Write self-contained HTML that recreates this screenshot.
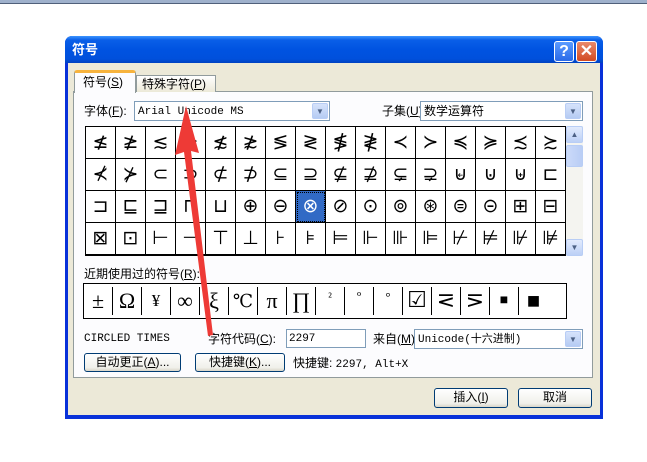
<!DOCTYPE html>
<html><head><meta charset="utf-8"><style>
*{margin:0;padding:0;box-sizing:border-box}
body{width:647px;height:462px;background:#fff;position:relative;overflow:hidden;font-family:"Liberation Sans","Noto Sans CJK SC",sans-serif;font-size:12px;color:#000}
.a{position:absolute}
.t{position:absolute;font-size:12px;white-space:nowrap;line-height:14px}
.mono{font-family:"Liberation Mono","Noto Sans CJK SC",monospace;font-size:11px}
.combo{position:absolute;background:#fff;border:1px solid #7f9db9}
.dd{position:absolute;right:1px;top:1px;bottom:1px;width:16px;background:linear-gradient(#d6e3fb,#b5cbf3);border:1px solid #b8cdf5;border-radius:2px;color:#4d6185;font-size:8px;text-align:center;line-height:15px}
.btn{position:absolute;border:1px solid #003c74;border-radius:3px;background:linear-gradient(#fff,#f0f0ea 80%,#d8d5c8);text-align:center;line-height:17px;font-size:12px}
.grid{position:absolute;left:85px;top:126px;width:481px;height:130px;border:1px solid #000;background:#fff;display:grid;grid-template-columns:repeat(16,30px);grid-template-rows:repeat(4,32px)}
.grid div{border-right:1px solid #000;border-bottom:1px solid #000;text-align:center;font-family:"DejaVu Sans",sans-serif;font-size:19px;line-height:31px}
.rec{position:absolute;left:83px;top:283px;width:484px;height:36px;border:1px solid #000;background:#fff;display:grid;grid-template-columns:repeat(16,29px)}
.rec div{border-right:1px solid #000;margin:3px 0;text-align:center;font-family:"Liberation Serif","DejaVu Serif",serif;font-size:22px;line-height:28px}
</style></head><body>
<div class="a" style="left:0;top:0;width:647px;height:4px;background:#9fb1cc;border-bottom:1px solid #50607a"></div>
<!-- dialog -->
<div class="a" style="left:65px;top:36px;width:538px;height:383px;background:#0831d9;border-radius:7px 7px 0 0"></div>
<div class="a" style="left:65px;top:36px;width:538px;height:27px;border-radius:7px 7px 0 0;background:linear-gradient(#3d95ff,#0a5fe8 15%,#0053e1 50%,#0050dc 85%,#0041c0)"></div>
<div class="t" style="left:72px;top:43px;color:#fff;font-weight:bold;font-size:13px">符号</div>
<div class="a" style="left:554px;top:41px;width:20px;height:21px;border:1px solid #fff;border-radius:3px;background:linear-gradient(#5b9bff,#2a6ae8);color:#fff;font-weight:bold;font-size:16px;text-align:center;line-height:19px">?</div>
<div class="a" style="left:576px;top:41px;width:21px;height:21px;border:1px solid #fff;border-radius:3px;background:linear-gradient(#e98a6c,#d24a22);color:#fff;font-weight:bold;font-size:16px;text-align:center;line-height:19px">✕</div>
<div class="a" style="left:68px;top:63px;width:532px;height:352px;background:#ece9d8"></div>
<!-- tabs & panel -->
<div class="a" style="left:73px;top:91px;width:520px;height:287px;background:#fcfcfe;border:1px solid #919b9c"></div>
<div class="a" style="left:136px;top:75px;width:80px;height:17px;background:linear-gradient(#fff,#ece9d8);border:1px solid #919b9c;border-bottom:none"></div>
<div class="t" style="left:142px;top:77px">特殊字符(<u>P</u>)</div>
<div class="a" style="left:74px;top:70px;width:62px;height:23px;background:#fcfcfe;border:1px solid #919b9c;border-top:3px solid #f7b33d;border-bottom:none;border-radius:3px 3px 0 0"></div>
<div class="t" style="left:83px;top:75px">符号(<u>S</u>)</div>
<div class="t" style="left:84px;top:104px">字体(<u>F</u>):</div>
<div class="combo" style="left:134px;top:101px;width:196px;height:20px"><span class="t mono" style="left:3px;top:3px">Arial Unicode MS</span><div class="dd">▼</div></div>
<div class="t" style="left:382px;top:104px">子集(<u>U</u>):</div>
<div class="combo" style="left:420px;top:101px;width:163px;height:20px"><span class="t" style="left:3px;top:2px">数学运算符</span><div class="dd">▼</div></div>
<div class="grid">
<div>≰</div><div>≱</div><div>≲</div><div>≳</div><div>≴</div><div>≵</div><div>≶</div><div>≷</div><div>≸</div><div>≹</div><div>≺</div><div>≻</div><div>≼</div><div>≽</div><div>≾</div><div>≿</div>
<div>⊀</div><div>⊁</div><div>⊂</div><div>⊃</div><div>⊄</div><div>⊅</div><div>⊆</div><div>⊇</div><div>⊈</div><div>⊉</div><div>⊊</div><div>⊋</div><div>⊌</div><div>⊍</div><div>⊎</div><div>⊏</div>
<div>⊐</div><div>⊑</div><div>⊒</div><div>⊓</div><div>⊔</div><div>⊕</div><div>⊖</div><div style="background:#316ac5;color:#fff;outline:1px dotted #000;outline-offset:-2px">⊗</div><div>⊘</div><div>⊙</div><div>⊚</div><div>⊛</div><div>⊜</div><div>⊝</div><div>⊞</div><div>⊟</div>
<div>⊠</div><div>⊡</div><div>⊢</div><div>⊣</div><div>⊤</div><div>⊥</div><div>⊦</div><div>⊧</div><div>⊨</div><div>⊩</div><div>⊪</div><div>⊫</div><div>⊬</div><div>⊭</div><div>⊮</div><div>⊯</div>
</div>
<div class="a" style="left:566px;top:126px;width:17px;height:130px;background:#f4f4f0"></div>
<div class="a" style="left:566px;top:126px;width:17px;height:17px;background:linear-gradient(#e2ebfd,#bcd0f6);border:1px solid #b8cdf5;border-radius:2px;font-size:8px;color:#4d6185;text-align:center;line-height:15px">▲</div>
<div class="a" style="left:566px;top:145px;width:17px;height:22px;background:linear-gradient(90deg,#cbdaf9,#b9cdf5);border:1px solid #b8cdf5;border-radius:2px"></div>
<div class="a" style="left:566px;top:239px;width:17px;height:17px;background:linear-gradient(#e2ebfd,#bcd0f6);border:1px solid #b8cdf5;border-radius:2px;font-size:8px;color:#4d6185;text-align:center;line-height:15px">▼</div>
<div class="t" style="left:84px;top:267px">近期使用过的符号(<u>R</u>):</div>
<div class="rec">
<div>±</div><div>Ω</div><div style="font-size:17px">¥</div><div>∞</div><div>ξ</div><div style="font-size:18px">℃</div><div>π</div><div>∏</div><div style="font-size:12px;line-height:20px">²</div><div style="font-size:13px;line-height:20px">º</div><div style="font-size:13px;line-height:20px">°</div><div style="font-family:'DejaVu Sans'">☑</div><div style="font-family:'DejaVu Sans'">⋜</div><div style="font-family:'DejaVu Sans'">⋝</div><div style="font-size:14px">■</div><div style="border:none">■</div>
</div>
<div class="t mono" style="left:84px;top:332px">CIRCLED TIMES</div>
<div class="t" style="left:208px;top:332px">字符代码(<u>C</u>):</div>
<div class="combo" style="left:286px;top:329px;width:80px;height:19px"><span class="t mono" style="left:2px;top:2px">2297</span></div>
<div class="t" style="left:373px;top:332px">来自(<u>M</u>):</div>
<div class="combo" style="left:414px;top:329px;width:169px;height:20px"><span class="t mono" style="left:3px;top:3px">Unicode(十六进制)</span><div class="dd">▼</div></div>
<div class="btn" style="left:84px;top:353px;width:97px;height:19px">自动更正(<u>A</u>)...</div>
<div class="btn" style="left:195px;top:353px;width:90px;height:19px">快捷键(<u>K</u>)...</div>
<div class="t" style="left:293px;top:356px">快捷键: <span class="mono">2297, Alt+X</span></div>
<div class="btn" style="left:434px;top:388px;width:74px;height:20px">插入(<u>I</u>)</div>
<div class="btn" style="left:518px;top:388px;width:74px;height:20px">取消</div>
<!-- red arrow -->
<svg class="a" style="left:0;top:0" width="647" height="462"><polygon points="186,106 175,155 184,152 208,336 213,335 191,151 199,153" fill="#ee3a36"/></svg>
</body></html>
